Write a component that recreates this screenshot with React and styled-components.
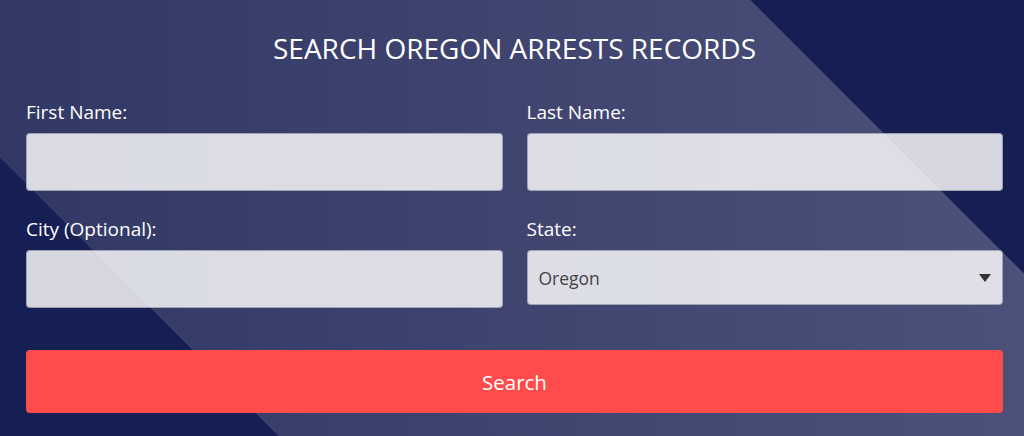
import React from 'react';
import styled, { createGlobalStyle } from 'styled-components';

const GlobalStyle = createGlobalStyle`
    html, body {
        margin: 0;
        padding: 0;
    }
    body {
        font-family: "Open Sans", "Noto Sans", "Liberation Sans", sans-serif;
    }
`;

// navy outside a diagonal band, horizontal gradient inside it
const Page = styled.div`
    width: 1024px;
    height: 436px;
    box-sizing: border-box;
    padding: 30px 21px 0 26px;
    background:
        linear-gradient(45deg, #161f54 197px, transparent 197px, transparent 839px, #161f54 839px),
        linear-gradient(90deg, #323865 0%, #4b5179 100%);
    overflow: hidden;
`;

const Title = styled.h2`
    margin: 0 0 33px;
    text-align: center;
    color: #ffffff;
    font-size: 28px;
    font-weight: 400;
    line-height: 36px;
`;

const Grid = styled.div`
    display: grid;
    grid-template-columns: 1fr 1fr;
    column-gap: 24px;
    row-gap: 25px;
`;

const Field = styled.div`
    display: flex;
    flex-direction: column;
`;

const Label = styled.label`
    color: #ffffff;
    font-size: 19px;
    line-height: 26px;
    margin-bottom: 8px;
`;

const Input = styled.input`
    box-sizing: border-box;
    height: 58px;
    width: 100%;
    border: 1px solid rgba(120, 124, 150, 0.6);
    border-radius: 4px;
    background: rgba(255, 255, 255, 0.82);
    outline: none;
    padding: 0 12px;
    font-family: inherit;
    font-size: 17.5px;
    color: #444;
`;

const SelectWrap = styled.div`
    position: relative;
`;

const Select = styled.select`
    appearance: none;
    -webkit-appearance: none;
    box-sizing: border-box;
    width: 100%;
    height: 55px;
    border: 1px solid rgba(120, 124, 150, 0.6);
    border-radius: 4px;
    background: rgba(255, 255, 255, 0.82);
    padding: 0 11px;
    font-family: inherit;
    font-size: 17.5px;
    color: #444;
    outline: none;
`;

const Caret = styled.span`
    position: absolute;
    right: 12px;
    top: 24px;
    width: 0;
    height: 0;
    border-left: 6px solid transparent;
    border-right: 6px solid transparent;
    border-top: 8px solid #333;
    pointer-events: none;
`;

const Button = styled.button`
    display: block;
    width: 100%;
    height: 63px;
    margin-top: 42px;
    border: none;
    border-radius: 4px;
    background: #ff4b4c;
    color: #ffffff;
    font-family: inherit;
    font-size: 20.5px;
    cursor: pointer;
`;

export default function App() {
    return (
        <Page>
            <GlobalStyle />
            <Title>SEARCH OREGON ARRESTS RECORDS</Title>
            <Grid>
                <Field>
                    <Label>First Name:</Label>
                    <Input type="text" />
                </Field>
                <Field>
                    <Label>Last Name:</Label>
                    <Input type="text" />
                </Field>
                <Field>
                    <Label>City (Optional):</Label>
                    <Input type="text" />
                </Field>
                <Field>
                    <Label>State:</Label>
                    <SelectWrap>
                        <Select defaultValue="Oregon">
                            <option>Oregon</option>
                        </Select>
                        <Caret />
                    </SelectWrap>
                </Field>
            </Grid>
            <Button>Search</Button>
        </Page>
    );
}
